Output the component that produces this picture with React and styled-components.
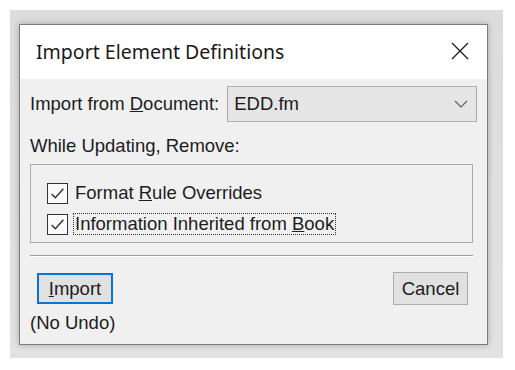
import React, { useState } from 'react';
import styled, { createGlobalStyle } from 'styled-components';

const GlobalStyle = createGlobalStyle`
  html, body {
    margin: 0;
    padding: 0;
    background: #ffffff;
  }
  body {
    font-family: "Liberation Sans", Arial, sans-serif;
    color: #1c1c1c;
  }
`;

// gray halo round the dialog, as in the captured screenshot
const Frame = styled.div`
  margin: 10px 0 0 10px;
  width: 493px;
  height: 348px;
  box-sizing: border-box;
  padding: 14px 15px 13px 9px;
  background: linear-gradient(#dcdcdc, #e2e2e2);
`;

const Dialog = styled.div`
  width: 469px;
  height: 321px;
  box-sizing: border-box;
  border: 1px solid #7c7c7c;
  box-shadow: 0 0 6px rgba(0, 0, 0, 0.25);
  background: #f0f0f0;
  display: flex;
  flex-direction: column;
`;

const TitleBar = styled.div`
  height: 54px;
  flex: none;
  background: #ffffff;
  display: flex;
  align-items: center;
  justify-content: space-between;
  padding: 0 16px 0 16px;
`;

const Title = styled.span`
  font-family: "Noto Sans", "Open Sans", sans-serif;
  font-size: 19.5px;
  color: #1a1a1a;
  margin-top: -1px;
`;

const CloseButton = styled.button`
  width: 22px;
  height: 22px;
  padding: 0;
  border: none;
  background: transparent;
  display: flex;
  align-items: center;
  justify-content: center;
  margin-top: -3px;
`;

const Body = styled.div`
  flex: 1;
  display: flex;
  flex-direction: column;
  padding: 7px 14px 0 10px;
  font-size: 18.5px;
`;

const ImportRow = styled.div`
  display: flex;
  align-items: center;
  height: 36px;
  margin-right: -4px;
`;

const Label = styled.span`
  white-space: nowrap;
`;

const Select = styled.div`
  margin-left: 8px;
  flex: 1;
  height: 36px;
  box-sizing: border-box;
  border: 1px solid #adadad;
  background: #e5e5e5;
  display: flex;
  align-items: center;
  justify-content: space-between;
  padding: 0 8px 0 6px;
`;

const SectionLabel = styled.div`
  margin-top: 14px;
  line-height: 20px;
`;

const GroupBox = styled.div`
  margin-top: 8px;
  height: 79px;
  box-sizing: border-box;
  border: 1px solid #a9a9a9;
  padding: 17px 0 0 16px;
  display: flex;
  flex-direction: column;
  gap: 9px;
`;

const CheckRow = styled.label`
  display: flex;
  align-items: center;
  height: 22px;
`;

const Box = styled.span`
  width: 21px;
  height: 21px;
  box-sizing: border-box;
  border: 1px solid #333333;
  background: #fafafa;
  display: flex;
  align-items: center;
  justify-content: center;
  flex: none;
`;

const CheckText = styled.span`
  margin-left: 5px;
  padding: 0 1px;
  line-height: 20px;
  border: 1px dotted ${p => (p.focused ? '#333333' : 'transparent')};
`;

const Separator = styled.div`
  margin-top: 12px;
  height: 1px;
  background: #a0a0a0;
  border-bottom: 1px solid #ffffff;
`;

const Footer = styled.div`
  margin-top: 15px;
  display: flex;
  justify-content: space-between;
  align-items: flex-start;
`;

const ImportColumn = styled.div`
  display: flex;
  flex-direction: column;
  align-items: flex-start;
`;

const Button = styled.button`
  font-family: "Liberation Sans", Arial, sans-serif;
  font-size: 18.5px;
  color: #1c1c1c;
  box-sizing: border-box;
  background: #e1e1e1;
  padding: 0;
  border: ${p => (p.primary ? '2px solid #0a74d4' : '1px solid #adadad')};
  width: ${p => (p.primary ? '76px' : '75px')};
  height: ${p => (p.primary ? '31px' : '33px')};
  margin-left: ${p => (p.primary ? '7px' : '0')};
  margin-top: ${p => (p.primary ? '1px' : '0')};
  margin-right: ${p => (p.primary ? '0' : '5px')};
`;

const Note = styled.span`
  margin-top: 9px;
  line-height: 20px;
`;

const Check = () => (
  <svg width="17" height="17" viewBox="0 0 16 16">
    <path d="M2.5 8.5 L6 12 L13.5 3.5" fill="none" stroke="#333" strokeWidth="1.4" />
  </svg>
);

const App = () => {
  const [formatRule, setFormatRule] = useState(true);
  const [inherited, setInherited] = useState(true);

  return (
    <>
      <GlobalStyle />
      <Frame>
        <Dialog>
          <TitleBar>
            <Title>Import Element Definitions</Title>
            <CloseButton aria-label="Close">
              <svg width="20" height="20" viewBox="0 0 20 20">
                <path d="M2 2 L18 18 M18 2 L2 18" stroke="#222" strokeWidth="1.4" />
              </svg>
            </CloseButton>
          </TitleBar>

          <Body>
            <ImportRow>
              <Label>
                Import from <u>D</u>ocument:
              </Label>
              <Select>
                <span>EDD.fm</span>
                <svg width="14" height="8" viewBox="0 0 14 8">
                  <path d="M1 1 L7 7 L13 1" fill="none" stroke="#606060" strokeWidth="1.2" />
                </svg>
              </Select>
            </ImportRow>

            <SectionLabel>While Updating, Remove:</SectionLabel>

            <GroupBox>
              <CheckRow onClick={() => setFormatRule(!formatRule)}>
                <Box>{formatRule && <Check />}</Box>
                <CheckText>
                  Format <u>R</u>ule Overrides
                </CheckText>
              </CheckRow>
              <CheckRow onClick={() => setInherited(!inherited)}>
                <Box>{inherited && <Check />}</Box>
                <CheckText focused>
                  Information Inherited from <u>B</u>ook
                </CheckText>
              </CheckRow>
            </GroupBox>

            <Separator />

            <Footer>
              <ImportColumn>
                <Button primary>
                  <u>I</u>mport
                </Button>
                <Note>(No Undo)</Note>
              </ImportColumn>
              <Button>Cancel</Button>
            </Footer>
          </Body>
        </Dialog>
      </Frame>
    </>
  );
};

export default App;
